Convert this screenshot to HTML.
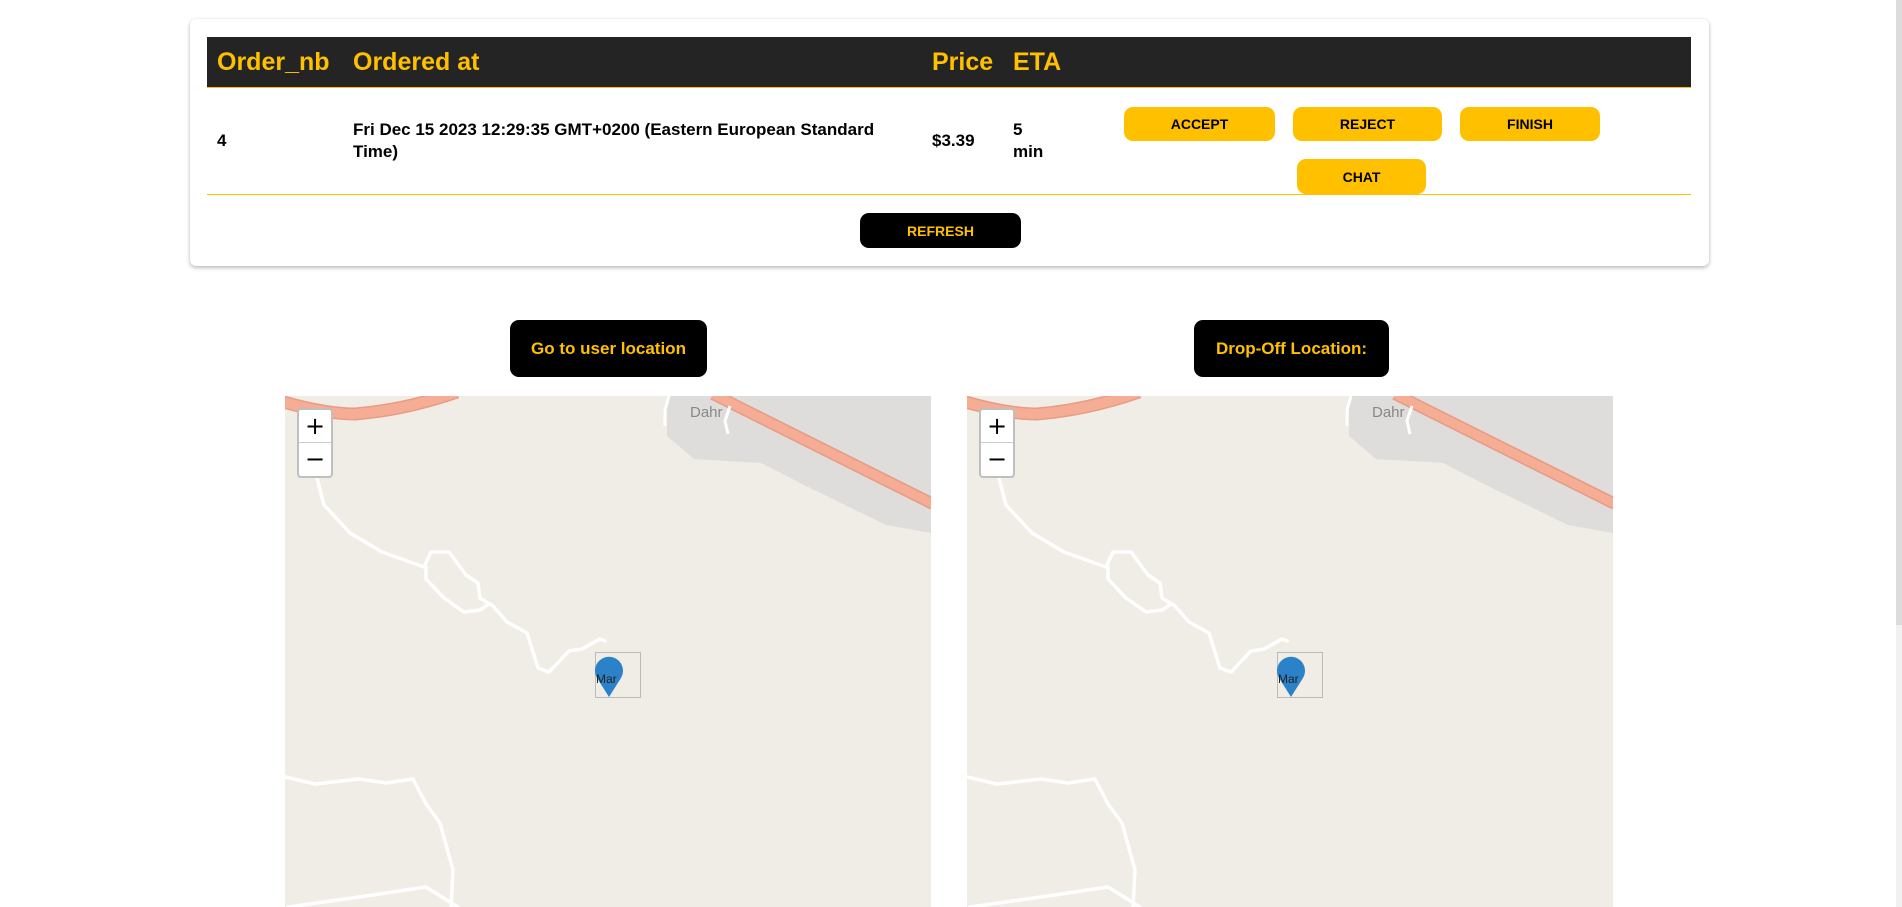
<!DOCTYPE html>
<html><head><meta charset="utf-8"><style>
*{margin:0;padding:0;box-sizing:border-box}
body{width:1902px;height:907px;overflow:hidden;background:#fff;font-family:"Liberation Sans Narrow","Liberation Sans",sans-serif;position:relative}
.card{position:absolute;left:190px;top:19px;width:1519px;height:247px;background:#fff;border-radius:6px;box-shadow:0 2px 4px rgba(0,0,0,.25),0 0 2px rgba(0,0,0,.08)}
.hdr{position:absolute;left:207px;top:37px;width:1484px;height:51px;background:#242424;border-bottom:1px solid #ffc000}
.h{position:absolute;top:47px;color:#ffc000;font-weight:bold;font-size:25px;line-height:30px}
.t{position:absolute;color:#000;font-weight:bold;font-size:17px;line-height:22px}
.line{position:absolute;left:207px;top:194px;width:1484px;height:1px;background:#ffc000}
.yb{position:absolute;background:#ffc000;border-radius:9px;font-family:"Liberation Sans",sans-serif;font-weight:bold;font-size:14px;color:#000;display:flex;align-items:center;justify-content:center}
.bb{position:absolute;background:#000;border-radius:9px;color:#ffc000;font-weight:bold;display:flex;align-items:center;justify-content:center}
.map{position:absolute;top:396px;width:646px;height:511px;background:#f0ede6;overflow:hidden}
.zc{position:absolute;left:12px;top:12px;width:36px;height:70px;background:#fff;border:2px solid rgba(0,0,0,.25);border-radius:4px}
.zc div{height:33px;text-align:center;font:24px/33px "DejaVu Sans",sans-serif;color:#000}
.zc div:first-child{border-bottom:1px solid #ccc}
.sb{position:absolute;right:0;top:0;width:6px;height:907px;background:#f1f1f1}
.sb div{position:absolute;left:0;top:0;width:6px;height:625px;background:#dcdcdc}
</style></head><body>
<div class="card"></div>
<div class="hdr"></div>
<div class="h" style="left:217px">Order_nb</div>
<div class="h" style="left:353px">Ordered at</div>
<div class="h" style="left:932px">Price</div>
<div class="h" style="left:1013px">ETA</div>
<div class="t" style="left:217px;top:130px">4</div>
<div class="t" style="left:353px;top:119px;width:560px">Fri Dec 15 2023 12:29:35 GMT+0200 (Eastern European Standard Time)</div>
<div class="t" style="left:932px;top:130px">$3.39</div>
<div class="t" style="left:1013px;top:119px">5<br>min</div>
<div class="yb" style="left:1124px;top:107px;width:151px;height:34px">ACCEPT</div>
<div class="yb" style="left:1293px;top:107px;width:149px;height:34px">REJECT</div>
<div class="yb" style="left:1460px;top:107px;width:140px;height:34px">FINISH</div>
<div class="line"></div>
<div class="yb" style="left:1297px;top:159px;width:129px;height:35px">CHAT</div>
<div class="bb" style="left:860px;top:213px;width:161px;height:35px;font-family:'Liberation Sans',sans-serif;font-size:14px">REFRESH</div>
<div class="bb" style="left:510px;top:320px;width:197px;height:57px;font-size:17px">Go to user location</div>
<div class="bb" style="left:1194px;top:320px;width:195px;height:57px;font-size:17px">Drop-Off Location:</div>

<div class="map" style="left:285px"><svg width="646" height="511">
<polygon points="382,0 646,0 646,137 601,129 521,90 476,67 409,63 382,40" fill="#dedddb"/>
<path d="M-5,5 Q40,18 70,18 Q120,14 172,-4" fill="none" stroke="#e89b85" stroke-width="13"/><path d="M-5,5 Q40,18 70,18 Q120,14 172,-4" fill="none" stroke="#f5ad95" stroke-width="10"/>
<line x1="428" y1="-2" x2="648" y2="108" stroke="#e89b85" stroke-width="12"/><line x1="428" y1="-2" x2="648" y2="108" stroke="#f5ad95" stroke-width="9"/>
<path d="M384,0 L380,14 L380,30 M445,10 L440,25 L443,38" fill="none" stroke="#fff" stroke-width="3"/>
<text x="405" y="21" font-family="Liberation Sans,sans-serif" font-size="15" fill="#888">Dahr</text>
<g fill="none" stroke="#fff" stroke-width="3.5" stroke-linejoin="round" stroke-linecap="round"><polyline points="32,82 39,109 65,137 97,156 139,171 146,156 164,156 181,179 193,187 195,202 208,210 222,226 242,237 253,272 264,276 284,255 297,253 315,243 320,245"/>
<polyline points="141,171 141,183 159,202 179,216 195,214 204,208"/>
<polyline points="0,381 30,388 74,383 101,387 128,383 141,408 155,427 168,474 166,511"/>
<polyline points="3,511 74,501 141,491 173,511"/></g>
<rect x="310.5" y="256.5" width="45" height="45" fill="none" stroke="#bbb"/>
<path d="M324,301 L312,282 A14,14 0 1 1 336,282 Z" fill="#2c82c9"/>
<text x="311" y="287" font-family="Liberation Sans,sans-serif" font-size="12" fill="#222">Mar</text>
</svg><div class="zc"><div>+</div><div>−</div></div></div>

<div class="map" style="left:967px"><svg width="646" height="511">
<polygon points="382,0 646,0 646,137 601,129 521,90 476,67 409,63 382,40" fill="#dedddb"/>
<path d="M-5,5 Q40,18 70,18 Q120,14 172,-4" fill="none" stroke="#e89b85" stroke-width="13"/><path d="M-5,5 Q40,18 70,18 Q120,14 172,-4" fill="none" stroke="#f5ad95" stroke-width="10"/>
<line x1="428" y1="-2" x2="648" y2="108" stroke="#e89b85" stroke-width="12"/><line x1="428" y1="-2" x2="648" y2="108" stroke="#f5ad95" stroke-width="9"/>
<path d="M384,0 L380,14 L380,30 M445,10 L440,25 L443,38" fill="none" stroke="#fff" stroke-width="3"/>
<text x="405" y="21" font-family="Liberation Sans,sans-serif" font-size="15" fill="#888">Dahr</text>
<g fill="none" stroke="#fff" stroke-width="3.5" stroke-linejoin="round" stroke-linecap="round"><polyline points="32,82 39,109 65,137 97,156 139,171 146,156 164,156 181,179 193,187 195,202 208,210 222,226 242,237 253,272 264,276 284,255 297,253 315,243 320,245"/>
<polyline points="141,171 141,183 159,202 179,216 195,214 204,208"/>
<polyline points="0,381 30,388 74,383 101,387 128,383 141,408 155,427 168,474 166,511"/>
<polyline points="3,511 74,501 141,491 173,511"/></g>
<rect x="310.5" y="256.5" width="45" height="45" fill="none" stroke="#bbb"/>
<path d="M324,301 L312,282 A14,14 0 1 1 336,282 Z" fill="#2c82c9"/>
<text x="311" y="287" font-family="Liberation Sans,sans-serif" font-size="12" fill="#222">Mar</text>
</svg><div class="zc"><div>+</div><div>−</div></div></div>
<div class="sb"><div></div></div>
</body></html>
